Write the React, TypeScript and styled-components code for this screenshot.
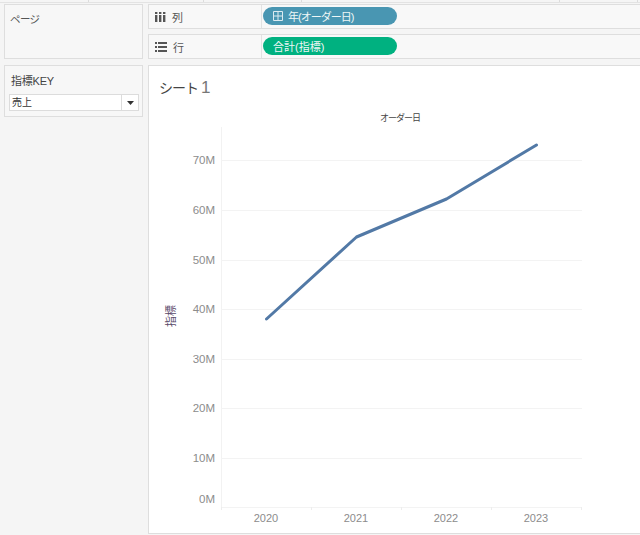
import React from "react";
import styled, { createGlobalStyle } from "styled-components";

const years = ["2020", "2021", "2022", "2023"];
const yAxis = [
  { label: "70M", y: 60, labelY: 64 },
  { label: "60M", y: 110, labelY: 114 },
  { label: "50M", y: 160, labelY: 164 },
  { label: "40M", y: 209, labelY: 213 },
  { label: "30M", y: 259, labelY: 263 },
  { label: "20M", y: 308, labelY: 312 },
  { label: "10M", y: 358, labelY: 362 },
  { label: "0M", y: 407, labelY: 403 },
];
const AXIS_X = 72;
const RIGHT_X = 433;
const BASE_Y = 407;

const App = () => (
  <>
    <GlobalStyle />
    <Page>
      <TopStrip>
        <Tick $left={88} />
        <Tick $left={203} />
        <Tick $left={301} />
        <Tick $left={559} />
        <Tick $left={637} />
      </TopStrip>
      <Workspace>
        <Side>
          <PagesCard>ページ</PagesCard>
          <FilterCard>
            <FilterTitle>指標KEY</FilterTitle>
            <Select>
              <SelectValue>売上</SelectValue>
              <SelectArrow>
                <svg width="7" height="4" viewBox="0 0 7 4">
                  <path d="M0 0h7L3.5 4z" fill="#333" />
                </svg>
              </SelectArrow>
            </Select>
          </FilterCard>
        </Side>
        <Main>
          <Shelf>
            <ShelfLabel>
              <svg width="11" height="10" viewBox="0 0 11 10">
                <path d="M0 0h2.4v2H0zM4 0h2.4v2H4zM8 0h2.4v2H8z" fill="#555" />
                <path d="M0 3h2.4v7H0zM4 3h2.4v7H4zM8 3h2.4v7H8z" fill="#555" />
              </svg>
              <span>列</span>
            </ShelfLabel>
            <ShelfBody>
              <Pill $color="#4996b2" $spacing={-1}>
                <svg width="10" height="10" viewBox="0 0 10 10">
                  <path d="M.5.5h9v9h-9zM5 .5v9M.5 5h9" fill="none" stroke="#dcebf1" />
                </svg>
                <span>年(オーダー日)</span>
              </Pill>
            </ShelfBody>
          </Shelf>
          <Shelf>
            <ShelfLabel>
              <svg width="12" height="10" viewBox="0 0 12 10">
                <path d="M0 0h2v2H0zM3 0h9v2H3zM0 4h2v2H0zM3 4h9v2H3zM0 8h2v2H0zM3 8h9v2H3z" fill="#555" />
              </svg>
              <span>行</span>
            </ShelfLabel>
            <ShelfBody>
              <Pill $color="#00b180" $spacing={0}>
                <span>合計(指標)</span>
              </Pill>
            </ShelfBody>
          </Shelf>
          <Sheet>
            <SheetTitle>
              シート<SheetNumber>1</SheetNumber>
            </SheetTitle>
            <Chart width="491" height="433" viewBox="0 0 491 433">
              <ChartText x="251" y="21" textAnchor="middle" fill="#444" fontSize="9" letterSpacing="-1">
                オーダー日
              </ChartText>
              <line x1={AXIS_X + 0.5} y1="27" x2={AXIS_X + 0.5} y2={BASE_Y} stroke="#f2f2f2" />
              {yAxis.map(({ label, y, labelY }) => (
                <g key={label}>
                  <line x1={AXIS_X} y1={y + 0.5} x2={RIGHT_X} y2={y + 0.5} stroke="#f3f3f3" />
                  <ChartText x="66" y={labelY} textAnchor="end" fill="#8c8c8c" fontSize="11.5">
                    {label}
                  </ChartText>
                </g>
              ))}
              {[0, 1, 2, 3, 4].map((i) => (
                <line
                  key={i}
                  x1={AXIS_X + 0.5 + i * 90}
                  y1={BASE_Y}
                  x2={AXIS_X + 0.5 + i * 90}
                  y2={BASE_Y + 3}
                  stroke="#ededed"
                />
              ))}
              {years.map((year, i) => (
                <ChartText key={year} x={117 + i * 90} y="422" textAnchor="middle" fill="#8c8c8c" fontSize="11">
                  {year}
                </ChartText>
              ))}
              <ChartText
                transform="translate(22 216) rotate(-90)"
                textAnchor="middle"
                fill="#5a4a6a"
                fontSize="11"
                y="4"
              >
                指標
              </ChartText>
              <polyline
                points="117.5,219 207.5,137 297.5,99 387.5,45"
                fill="none"
                stroke="#5279a6"
                strokeWidth="3"
                strokeLinejoin="round"
                strokeLinecap="round"
              />
            </Chart>
          </Sheet>
        </Main>
      </Workspace>
    </Page>
  </>
);

export default App;

const GlobalStyle = createGlobalStyle`
  html, body {
    margin: 0;
    padding: 0;
    background: #f5f5f5;
  }
  body {
    font-family: "Liberation Sans", "Noto Sans CJK JP", sans-serif;
  }
`;

const Page = styled.div`
  width: 640px;
  height: 535px;
  overflow: hidden;
  background: #f5f5f5;
  display: flex;
  flex-direction: column;
`;

const TopStrip = styled.div`
  height: 3px;
  flex: none;
  position: relative;
  border-bottom: 1px solid #e3e3e3;
  box-sizing: border-box;
`;

const Tick = styled.span<{ $left: number }>`
  position: absolute;
  top: 0;
  left: ${({ $left }) => $left}px;
  width: 1px;
  height: 2px;
  background: #dcdcdc;
`;

const Workspace = styled.div`
  flex: 1;
  display: flex;
  gap: 5px;
  padding: 1px 0 1px 4px;
  min-height: 0;
`;

const Side = styled.div`
  width: 139px;
  flex: none;
  display: flex;
  flex-direction: column;
  gap: 6px;
`;

const Card = styled.div`
  box-sizing: border-box;
  background: #f7f7f7;
  border: 1px solid #dedede;
  color: #555;
  font-size: 11px;
`;

const PagesCard = styled(Card)`
  height: 55px;
  padding: 6px 5px;
  font-size: 10.5px;
  letter-spacing: -0.6px;
  line-height: 16px;
`;

const FilterCard = styled(Card)`
  height: 52px;
  padding: 7px 3px 0 4px;
`;

const FilterTitle = styled.div`
  margin: 0 0 5px 2px;
  line-height: 16px;
  font-size: 11px;
  letter-spacing: -0.2px;
  color: #444;
`;

const Select = styled.div`
  height: 17px;
  box-sizing: border-box;
  display: flex;
  background: #fff;
  border: 1px solid #dcdcdc;
`;

const SelectValue = styled.div`
  flex: 1;
  padding-left: 2px;
  font-size: 10px;
  line-height: 15px;
  color: #333;
`;

const SelectArrow = styled.div`
  width: 16px;
  display: flex;
  align-items: center;
  justify-content: center;
  border-left: 1px solid #dcdcdc;
`;

const Main = styled.div`
  flex: 1;
  min-width: 0;
  display: flex;
  flex-direction: column;
  gap: 5px;
`;

const Shelf = styled.div`
  height: 25px;
  flex: none;
  box-sizing: border-box;
  display: flex;
  background: #f8f8f8;
  border: 1px solid #dedede;
  border-right: 0;
`;

const ShelfLabel = styled.div`
  width: 113px;
  box-sizing: border-box;
  padding-left: 6px;
  display: flex;
  align-items: center;
  gap: 6px;
  border-right: 1px solid #e2e2e2;
  font-size: 11px;
  color: #555;
`;

const ShelfBody = styled.div`
  flex: 1;
  padding: 2px 0 0 1px;
`;

const Pill = styled.div<{ $color: string; $spacing: number }>`
  width: 134px;
  height: 18px;
  box-sizing: border-box;
  padding-left: 10px;
  display: flex;
  align-items: center;
  gap: 5px;
  border-radius: 9px;
  background: ${({ $color }) => $color};
  color: #eef6f6;
  font-size: 11px;
  letter-spacing: ${({ $spacing }) => $spacing}px;
`;

const Sheet = styled.div`
  flex: none;
  margin-top: 1px;
  height: 469px;
  box-sizing: border-box;
  background: #fff;
  border: 1px solid #dedede;
  border-right: 0;
`;

const SheetTitle = styled.div`
  height: 34px;
  box-sizing: border-box;
  padding: 11px 0 0 10px;
  font-size: 14px;
  letter-spacing: -1px;
  line-height: 22px;
  color: #444;
`;

const SheetNumber = styled.span`
  margin-left: 3px;
  font-size: 17px;
  color: #777;
`;

const Chart = styled.svg`
  display: block;
`;

const ChartText = styled.text`
  font-family: "Liberation Sans", "Noto Sans CJK JP", sans-serif;
`;
